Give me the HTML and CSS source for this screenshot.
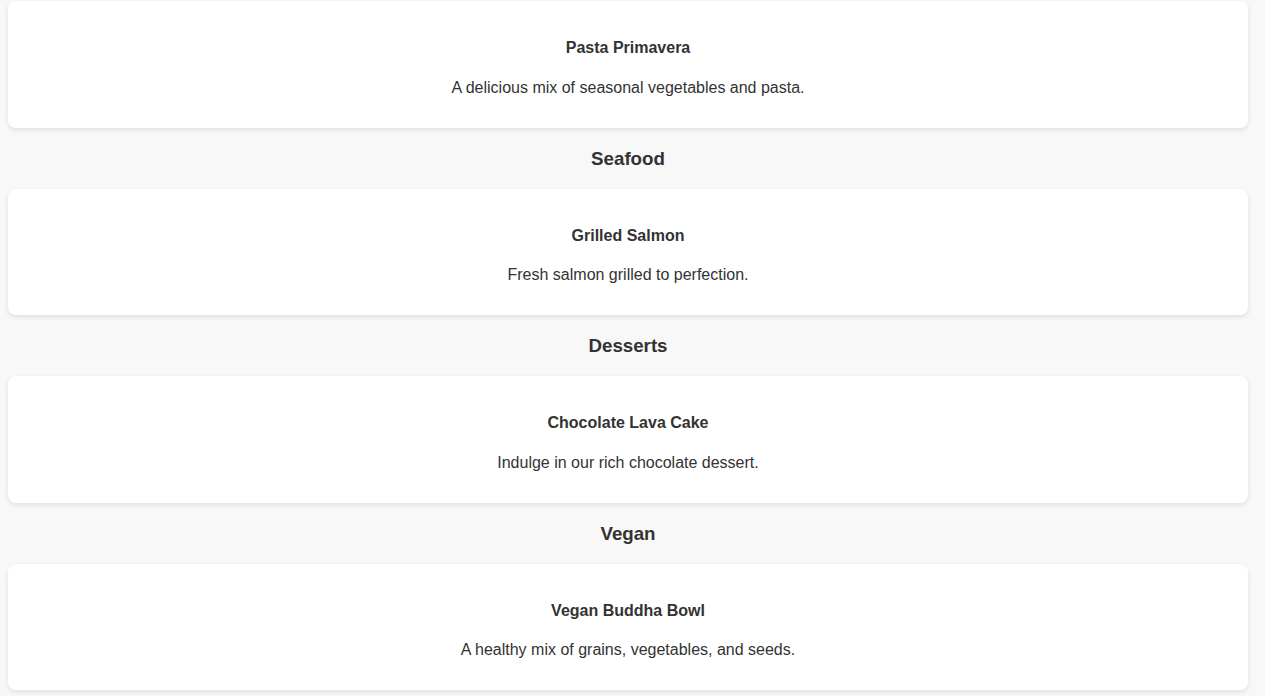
FILE: index.html
```html
<!DOCTYPE html>
<html lang="en">
<head>
<meta charset="utf-8">
<title>Menu</title>
<link rel="stylesheet" href="styles.css">
</head>
<body>
<main class="menu">
  <section class="category">
    <div class="card">
      <h4 class="dish-name">Pasta Primavera</h4>
      <p class="dish-desc">A delicious mix of seasonal vegetables and pasta.</p>
    </div>
  </section>
  <section class="category">
    <h3 class="category-title">Seafood</h3>
    <div class="card">
      <h4 class="dish-name">Grilled Salmon</h4>
      <p class="dish-desc">Fresh salmon grilled to perfection.</p>
    </div>
  </section>
  <section class="category">
    <h3 class="category-title">Desserts</h3>
    <div class="card">
      <h4 class="dish-name">Chocolate Lava Cake</h4>
      <p class="dish-desc">Indulge in our rich chocolate dessert.</p>
    </div>
  </section>
  <section class="category">
    <h3 class="category-title">Vegan</h3>
    <div class="card">
      <h4 class="dish-name">Vegan Buddha Bowl</h4>
      <p class="dish-desc">A healthy mix of grains, vegetables, and seeds.</p>
    </div>
  </section>
</main>
</body>
</html>
```

FILE: styles.css
```css
html, body {
  margin: 0;
  padding: 0;
}
body {
  background: #f8f8f8;
  color: #333;
  font-family: "Liberation Sans", Arial, sans-serif;
  font-size: 16px;
  overflow: hidden;
}
.menu {
  max-width: 1240px;
  margin: 0 8px;
  padding-top: 1px;
  text-align: center;
}
.category-title {
  font-size: 18.72px;
  font-weight: bold;
  margin: 20px 0;
  line-height: 21px;
}
.card {
  background: #fff;
  border-radius: 8px;
  box-shadow: 0 2px 5px rgba(0, 0, 0, 0.1);
  padding: 17px 16px 15px;
  margin-bottom: 20px;
  line-height: 18px;
}
.dish-name {
  font-size: 16px;
  font-weight: bold;
  margin: 21.28px 0;
}
.dish-desc {
  margin: 16px 0;
}
```
